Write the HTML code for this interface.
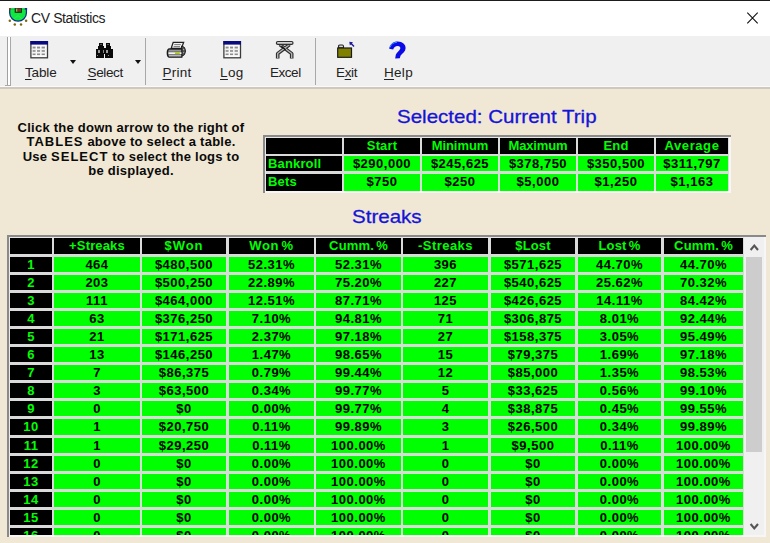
<!DOCTYPE html><html><head><meta charset="utf-8"><style>
*{margin:0;padding:0;box-sizing:border-box}
html,body{width:770px;height:543px;overflow:hidden;background:#f0e7d4;font-family:"Liberation Sans",sans-serif}
.abs{position:absolute}
#title{position:absolute;left:0;top:0;width:770px;height:36px;background:#fff}
#topline{position:absolute;left:0;top:0;width:770px;height:1px;background:#1c1c1c}
#ttext{position:absolute;left:31px;top:10px;font-size:14px;letter-spacing:-0.4px;color:#222;white-space:nowrap;line-height:16px}
#tb{position:absolute;left:0;top:36px;width:770px;height:51px;background:#f0f0f0}
#tbline{position:absolute;left:0;top:87px;width:770px;height:2px;background:#cdc9c0}
.tbt{position:absolute;top:64.5px;font-size:13.5px;color:#222;line-height:15px;white-space:nowrap}
.tbt u{text-decoration:underline;text-underline-offset:2px}
.sep{position:absolute;top:38px;width:1px;height:47px;background:#a8a8a8}
.tri{position:absolute;top:60px;width:0;height:0;border-left:3px solid transparent;border-right:3px solid transparent;border-top:4px solid #111}
.inst{position:absolute;left:0;width:262px;text-align:center;font-weight:bold;font-size:13px;letter-spacing:0.24px;color:#0a0a0a;line-height:14.6px;white-space:nowrap}
.blue{position:absolute;color:#1414d8;-webkit-text-stroke:0.3px #1414d8;font-size:19px;transform:scaleX(1.08);transform-origin:0 0;white-space:nowrap;line-height:20px}
.cw{letter-spacing:1.0px}
.c{position:absolute;overflow:hidden;font-weight:bold;font-size:13px;letter-spacing:0.5px;line-height:16px;text-align:center;white-space:nowrap}
.w{letter-spacing:0.15px;word-spacing:-1.5px}
.h{background:#000;color:#00ff00}
.d{background:#00ff00;color:#000}
</style></head><body>
<div id="title"></div><div id="topline"></div>
<svg class="abs" style="left:8px;top:8px" width="21" height="19" viewBox="0 0 21 19">
<path d="M1.7 0.7 H18.4 V5 A8.35 8.2 0 0 1 1.7 5 Z" fill="#10e840" stroke="#14308a" stroke-width="1.3"/>
<path d="M2.4 0 H17.7 V1.3 H2.4 Z" fill="#10e840"/>
<path d="M1 0 H2.6 V1.8 H1 Z" fill="#a03020"/>
<path d="M16.8 0 H19.1 V1.6 H16.8 Z" fill="#1a2a90"/>
<rect x="7.1" y="0.4" width="6.4" height="4" fill="#173c22" stroke="#0f3a18" stroke-width="0.9"/>
<rect x="8.1" y="0.6" width="1.4" height="3.1" fill="#c8b060"/>
<rect x="9.7" y="0.6" width="1.6" height="3.1" fill="#903020"/>
<rect x="11.4" y="0.6" width="1.3" height="3.1" fill="#a04030"/>
<path d="M6 11 L10 7.5 L14 11" fill="none" stroke="#50f080" stroke-width="0.8" opacity="0.6"/>
<circle cx="1.8" cy="12.7" r="1.25" fill="#7a6a10"/>
<circle cx="6.8" cy="16.5" r="1.25" fill="#7a6a10"/>
<circle cx="13" cy="16.5" r="1.25" fill="#7a6a10"/>
<circle cx="18.1" cy="12.7" r="1.25" fill="#7a6a10"/>
</svg>
<div id="ttext">CV Statistics</div>
<svg class="abs" style="left:746px;top:12px" width="13" height="13" viewBox="0 0 13 13"><path d="M1.3 0.7 L11.7 11.3 M11.7 0.7 L1.3 11.3" stroke="#111" stroke-width="1.1"/></svg>
<div id="tb"></div><div id="tbline"></div><div class="abs" style="left:0;top:86px;width:770px;height:1px;background:#fafafa"></div>
<div class="abs" style="left:7px;top:37px;width:1px;height:49px;background:#a0a0a0"></div>
<div class="abs" style="left:8px;top:37px;width:2px;height:49px;background:#fff"></div>
<div class="abs" style="left:10px;top:37px;width:1px;height:49px;background:#a8a8a8"></div>
<div class="abs" style="left:5px;top:85px;width:6px;height:1px;background:#a8a8a8"></div>
<svg class="abs" style="left:30px;top:41px" width="19" height="18" viewBox="0 0 19 18"><rect x="0.9" y="0.6" width="16.6" height="16.2" fill="#fbfbfb" stroke="#3a3a3a" stroke-width="1.3"/><rect x="0.4" y="0" width="17.6" height="3.6" fill="#0a0a80"/><rect x="2.6" y="5.6" width="3.0" height="1.9" fill="#8c8c8c"/><rect x="7.0" y="5.6" width="3.1" height="1.9" fill="#8c8c8c"/><rect x="11.6" y="5.6" width="3.3" height="1.9" fill="#8c8c8c"/><rect x="2.6" y="9.1" width="3.0" height="1.7" fill="#8c8c8c"/><rect x="7.0" y="9.1" width="3.1" height="1.7" fill="#8c8c8c"/><rect x="11.6" y="9.1" width="3.3" height="1.7" fill="#8c8c8c"/><rect x="2.6" y="12.4" width="3.0" height="1.7" fill="#8c8c8c"/><rect x="7.0" y="12.4" width="3.1" height="1.7" fill="#8c8c8c"/><rect x="11.6" y="12.4" width="3.3" height="1.7" fill="#8c8c8c"/><path d="M1.6 8.6 H17 M1.6 11.9 H17" stroke="#e4e4e4" stroke-width="0.6"/></svg>
<svg class="abs" style="left:222.5px;top:41px" width="19" height="18" viewBox="0 0 19 18"><rect x="0.9" y="0.6" width="16.6" height="16.2" fill="#fbfbfb" stroke="#3a3a3a" stroke-width="1.3"/><rect x="0.4" y="0" width="17.6" height="3.6" fill="#0a0a80"/><rect x="2.6" y="5.6" width="3.0" height="1.9" fill="#8c8c8c"/><rect x="7.0" y="5.6" width="3.1" height="1.9" fill="#8c8c8c"/><rect x="11.6" y="5.6" width="3.3" height="1.9" fill="#8c8c8c"/><rect x="2.6" y="9.1" width="3.0" height="1.7" fill="#8c8c8c"/><rect x="7.0" y="9.1" width="3.1" height="1.7" fill="#8c8c8c"/><rect x="11.6" y="9.1" width="3.3" height="1.7" fill="#8c8c8c"/><rect x="2.6" y="12.4" width="3.0" height="1.7" fill="#8c8c8c"/><rect x="7.0" y="12.4" width="3.1" height="1.7" fill="#8c8c8c"/><rect x="11.6" y="12.4" width="3.3" height="1.7" fill="#8c8c8c"/><path d="M1.6 8.6 H17 M1.6 11.9 H17" stroke="#e4e4e4" stroke-width="0.6"/></svg>
<svg class="abs" style="left:94px;top:40px" width="22" height="20" viewBox="0 0 22 20" shape-rendering="crispEdges">
<path d="M5 3 H9 V6 H10 V8 H12 V6 H12 V3 H16 V6 H17 V9 H19 V18 H11 V14 H10 V18 H2 V9 H4 V6 H5 Z" fill="#0a0a0a"/>
<rect x="4" y="10" width="2" height="3" fill="#9a9a9a"/>
<rect x="9" y="10" width="1" height="3" fill="#8a8a8a"/>
<rect x="12" y="10" width="2" height="3" fill="#9a9a9a"/>
<rect x="3" y="15" width="1" height="1" fill="#888"/>
<rect x="14" y="15" width="1" height="1" fill="#888"/>
<rect x="6" y="4" width="2" height="1" fill="#555"/>
<rect x="13" y="4" width="2" height="1" fill="#555"/>
</svg>
<svg class="abs" style="left:164px;top:39px" width="26" height="22" viewBox="0 0 26 22">
<path d="M9.2 3.4 H19.6 L17.4 9.4 H7.2 Z" fill="#f2f2f2" stroke="#222" stroke-width="1.3"/>
<path d="M10.3 5.6 H16.8 M9.6 7.6 H16" stroke="#6a6a6a" stroke-width="0.9"/>
<path d="M17.5 7 Q21.5 7.5 21.5 12 Q21.5 16.5 17.5 17.5 Z" fill="#555" stroke="#222" stroke-width="1"/>
<path d="M5.5 9.9 H17.8 V18.2 H5.5 Q3.3 18 3.3 14 Q3.3 10 5.5 9.9 Z" fill="#6e6e6e" stroke="#1a1a1a" stroke-width="1.3"/>
<rect x="4.5" y="13.3" width="13" height="1.7" fill="#f4f4f4"/>
<rect x="11" y="13.2" width="4.8" height="1.9" fill="#a8c820"/>
<rect x="5" y="15.8" width="12.2" height="1.6" fill="#b8b8b8"/>
<rect x="5" y="11.1" width="12.2" height="1.2" fill="#9a9a9a"/>
<circle cx="19.6" cy="10.5" r="0.7" fill="#aaa"/><circle cx="19.6" cy="13.6" r="0.7" fill="#aaa"/>
</svg>
<svg class="abs" style="left:274px;top:40px" width="22" height="20" viewBox="0 0 22 20">
<g fill="none" stroke-linejoin="round" stroke-linecap="butt">
<path d="M3.7 18.6 V13.6 L15.6 4.6" stroke="#2e2e2e" stroke-width="3.6"/>
<path d="M17.7 18.6 V13.6 L5.8 4.6" stroke="#2e2e2e" stroke-width="3.6"/>
<path d="M3.7 18.1 V13.6 L15.6 4.6" stroke="#b8b8b8" stroke-width="1.3"/>
<path d="M17.7 18.1 V13.6 L5.8 4.6" stroke="#b8b8b8" stroke-width="1.3"/>
<path d="M7.4 6.2 L11.6 9.8" stroke="#0a0a0a" stroke-width="1.3"/>
<rect x="2.4" y="1.5" width="16.6" height="2.8" rx="1.4" fill="#d4d4d4" stroke="#2e2e2e" stroke-width="1.2"/>
<path d="M5.5 4.6 H16" stroke="#333" stroke-width="1"/>
</g>
</svg>
<svg class="abs" style="left:333px;top:38px" width="26" height="24" viewBox="0 0 26 24">
<path d="M5.6 9.9 V7.6 Q5.8 7 7 7 H9.4 Q10.4 7 10.5 8.4 V9.9 Z" fill="#d8d8d8" stroke="#222" stroke-width="1.1"/>
<rect x="4.7" y="10" width="13.8" height="9.3" fill="#808000" stroke="#1a1a1a" stroke-width="1.2"/>
<path d="M21 8.6 L17.2 4.6" stroke="#1a1a9a" stroke-width="1.4"/>
<path d="M16.3 3.8 L20 4.3 L16.9 7.4 Z" fill="#1a1a9a"/>
</svg>
<svg class="abs" style="left:385px;top:38px" width="26" height="24" viewBox="0 0 26 24">
<path d="M4.2 10.8 C4.8 6.2 8.5 3.5 12.8 3.6 C17.5 3.7 20.8 6.5 20.6 10.3 C20.4 13.6 17.8 15.4 15.6 17.4 L14.8 20.2 L10.2 20.4 L10.8 16.8 C11.8 14.2 14.8 12.8 15.3 10.6 C15.6 9 14.4 8 12.6 8.1 C10.3 8.2 8.8 9.6 8.2 11.4 Z" fill="#0a0ae6"/>
<path d="M5 9.4 C6 6 9 4.4 12 4.3" fill="none" stroke="#40c8ff" stroke-width="0.9" opacity="0.8"/>
</svg>
<div class="tbt" style="left:25px;letter-spacing:-0.15px"><u>T</u>able</div>
<div class="tbt" style="left:87.5px;letter-spacing:-0.36px"><u>S</u>elect</div>
<div class="tbt" style="left:162.5px;letter-spacing:0.22px"><u>P</u>rint</div>
<div class="tbt" style="left:220px;letter-spacing:0.4px"><u>L</u>og</div>
<div class="tbt" style="left:270px;letter-spacing:-0.47px">Excel</div>
<div class="tbt" style="left:336px;letter-spacing:-0.37px">E<u>x</u>it</div>
<div class="tbt" style="left:384px;letter-spacing:0.3px"><u>H</u>elp</div>
<div class="tri" style="left:70px"></div><div class="tri" style="left:135px"></div>
<div class="sep" style="left:145px"></div><div class="sep" style="left:315px"></div>
<div class="inst" style="top:120.50px">Click the down arrow to the right of</div>
<div class="inst" style="top:135.10px"><span class=cw>TABLES</span> above to select a table.</div>
<div class="inst" style="top:149.70px">Use <span class=cw>SELECT</span> to select the logs to</div>
<div class="inst" style="top:164.30px">be displayed.</div>
<div class="blue" style="left:397px;top:106.8px">Selected: Current Trip</div>
<div class="blue" style="left:352px;top:206.8px">Streaks</div>
<div class="abs" style="left:263px;top:135px;width:468px;height:58px;background:#dadada"></div><div class="abs" style="left:263px;top:135px;width:468px;height:2px;background:#8a8a8a"></div><div class="abs" style="left:263px;top:135px;width:2px;height:58px;background:#8a8a8a"></div><div class="abs" style="left:265px;top:137px;width:466px;height:1px;background:#e8e8e8"></div><div class="abs" style="left:265px;top:137px;width:1px;height:56px;background:#e8e8e8"></div><div class="abs" style="left:265px;top:191px;width:466px;height:2px;background:#f6f6f6"></div><div class="abs" style="left:729px;top:137px;width:2px;height:56px;background:#f6f6f6"></div>
<div class="c h w" style="left:266px;top:138px;width:76px;height:16px;line-height:16px;text-align:left;padding-left:2px;"></div>
<div class="c h w" style="left:344px;top:138px;width:76px;height:16px;line-height:16px;">Start</div>
<div class="c h w" style="left:422px;top:138px;width:76px;height:16px;line-height:16px;letter-spacing:-0.06px;">Minimum</div>
<div class="c h w" style="left:500px;top:138px;width:76px;height:16px;line-height:16px;letter-spacing:-0.14px;">Maximum</div>
<div class="c h w" style="left:578px;top:138px;width:76px;height:16px;line-height:16px;">End</div>
<div class="c h w" style="left:656px;top:138px;width:72px;height:16px;line-height:16px;letter-spacing:0.59px;">Average</div>
<div class="c h w" style="left:266px;top:156px;width:76px;height:15px;line-height:16px;text-align:left;padding-left:2px;">Bankroll</div>
<div class="c d" style="left:344px;top:156px;width:76px;height:15px;line-height:16px;">$290,000</div>
<div class="c d" style="left:422px;top:156px;width:76px;height:15px;line-height:16px;">$245,625</div>
<div class="c d" style="left:500px;top:156px;width:76px;height:15px;line-height:16px;">$378,750</div>
<div class="c d" style="left:578px;top:156px;width:76px;height:15px;line-height:16px;">$350,500</div>
<div class="c d" style="left:656px;top:156px;width:72px;height:15px;line-height:16px;">$311,797</div>
<div class="c h w" style="left:266px;top:174px;width:76px;height:17px;line-height:16px;text-align:left;padding-left:2px;">Bets</div>
<div class="c d" style="left:344px;top:174px;width:76px;height:17px;line-height:16px;">$750</div>
<div class="c d" style="left:422px;top:174px;width:76px;height:17px;line-height:16px;">$250</div>
<div class="c d" style="left:500px;top:174px;width:76px;height:17px;line-height:16px;">$5,000</div>
<div class="c d" style="left:578px;top:174px;width:76px;height:17px;line-height:16px;">$1,250</div>
<div class="c d" style="left:656px;top:174px;width:72px;height:17px;line-height:16px;">$1,163</div>
<div class="abs" style="left:7px;top:235px;width:759px;height:302px;background:#dadada"></div><div class="abs" style="left:7px;top:235px;width:759px;height:2px;background:#8a8a8a"></div><div class="abs" style="left:7px;top:235px;width:2px;height:302px;background:#8a8a8a"></div><div class="abs" style="left:9px;top:237px;width:757px;height:1px;background:#e8e8e8"></div><div class="abs" style="left:9px;top:237px;width:1px;height:300px;background:#e8e8e8"></div><div class="abs" style="left:9px;top:535px;width:757px;height:2px;background:#f6f6f6"></div><div class="abs" style="left:764px;top:237px;width:2px;height:300px;background:#f6f6f6"></div>
<div class="abs" style="left:10px;top:238px;width:734px;height:297px;overflow:hidden">
<div class="c h w" style="left:0px;top:0px;width:42px;height:16px;"></div>
<div class="c h w" style="left:44px;top:0px;width:86px;height:16px;">+Streaks</div>
<div class="c h w" style="left:132px;top:0px;width:84px;height:16px;letter-spacing:0.97px;">$Won</div>
<div class="c h w" style="left:219px;top:0px;width:85px;height:16px;letter-spacing:0.55px;">Won %</div>
<div class="c h w" style="left:306px;top:0px;width:85px;height:16px;">Cumm. %</div>
<div class="c h w" style="left:393px;top:0px;width:85px;height:16px;letter-spacing:0.45px;">-Streaks</div>
<div class="c h w" style="left:481px;top:0px;width:84px;height:16px;">$Lost</div>
<div class="c h w" style="left:568px;top:0px;width:83px;height:16px;">Lost %</div>
<div class="c h w" style="left:654px;top:0px;width:79px;height:16px;">Cumm. %</div>
<div class="c h" style="left:0px;top:19px;width:42px;height:15px;">1</div>
<div class="c d" style="left:44px;top:19px;width:86px;height:15px;">464</div>
<div class="c d" style="left:132px;top:19px;width:84px;height:15px;">$480,500</div>
<div class="c d" style="left:219px;top:19px;width:85px;height:15px;">52.31%</div>
<div class="c d" style="left:306px;top:19px;width:85px;height:15px;">52.31%</div>
<div class="c d" style="left:393px;top:19px;width:85px;height:15px;">396</div>
<div class="c d" style="left:481px;top:19px;width:84px;height:15px;">$571,625</div>
<div class="c d" style="left:568px;top:19px;width:83px;height:15px;">44.70%</div>
<div class="c d" style="left:654px;top:19px;width:79px;height:15px;">44.70%</div>
<div class="c h" style="left:0px;top:37px;width:42px;height:15px;">2</div>
<div class="c d" style="left:44px;top:37px;width:86px;height:15px;">203</div>
<div class="c d" style="left:132px;top:37px;width:84px;height:15px;">$500,250</div>
<div class="c d" style="left:219px;top:37px;width:85px;height:15px;">22.89%</div>
<div class="c d" style="left:306px;top:37px;width:85px;height:15px;">75.20%</div>
<div class="c d" style="left:393px;top:37px;width:85px;height:15px;">227</div>
<div class="c d" style="left:481px;top:37px;width:84px;height:15px;">$540,625</div>
<div class="c d" style="left:568px;top:37px;width:83px;height:15px;">25.62%</div>
<div class="c d" style="left:654px;top:37px;width:79px;height:15px;">70.32%</div>
<div class="c h" style="left:0px;top:55px;width:42px;height:15px;">3</div>
<div class="c d" style="left:44px;top:55px;width:86px;height:15px;">111</div>
<div class="c d" style="left:132px;top:55px;width:84px;height:15px;">$464,000</div>
<div class="c d" style="left:219px;top:55px;width:85px;height:15px;">12.51%</div>
<div class="c d" style="left:306px;top:55px;width:85px;height:15px;">87.71%</div>
<div class="c d" style="left:393px;top:55px;width:85px;height:15px;">125</div>
<div class="c d" style="left:481px;top:55px;width:84px;height:15px;">$426,625</div>
<div class="c d" style="left:568px;top:55px;width:83px;height:15px;">14.11%</div>
<div class="c d" style="left:654px;top:55px;width:79px;height:15px;">84.42%</div>
<div class="c h" style="left:0px;top:73px;width:42px;height:15px;">4</div>
<div class="c d" style="left:44px;top:73px;width:86px;height:15px;">63</div>
<div class="c d" style="left:132px;top:73px;width:84px;height:15px;">$376,250</div>
<div class="c d" style="left:219px;top:73px;width:85px;height:15px;">7.10%</div>
<div class="c d" style="left:306px;top:73px;width:85px;height:15px;">94.81%</div>
<div class="c d" style="left:393px;top:73px;width:85px;height:15px;">71</div>
<div class="c d" style="left:481px;top:73px;width:84px;height:15px;">$306,875</div>
<div class="c d" style="left:568px;top:73px;width:83px;height:15px;">8.01%</div>
<div class="c d" style="left:654px;top:73px;width:79px;height:15px;">92.44%</div>
<div class="c h" style="left:0px;top:91px;width:42px;height:15px;">5</div>
<div class="c d" style="left:44px;top:91px;width:86px;height:15px;">21</div>
<div class="c d" style="left:132px;top:91px;width:84px;height:15px;">$171,625</div>
<div class="c d" style="left:219px;top:91px;width:85px;height:15px;">2.37%</div>
<div class="c d" style="left:306px;top:91px;width:85px;height:15px;">97.18%</div>
<div class="c d" style="left:393px;top:91px;width:85px;height:15px;">27</div>
<div class="c d" style="left:481px;top:91px;width:84px;height:15px;">$158,375</div>
<div class="c d" style="left:568px;top:91px;width:83px;height:15px;">3.05%</div>
<div class="c d" style="left:654px;top:91px;width:79px;height:15px;">95.49%</div>
<div class="c h" style="left:0px;top:109px;width:42px;height:15px;">6</div>
<div class="c d" style="left:44px;top:109px;width:86px;height:15px;">13</div>
<div class="c d" style="left:132px;top:109px;width:84px;height:15px;">$146,250</div>
<div class="c d" style="left:219px;top:109px;width:85px;height:15px;">1.47%</div>
<div class="c d" style="left:306px;top:109px;width:85px;height:15px;">98.65%</div>
<div class="c d" style="left:393px;top:109px;width:85px;height:15px;">15</div>
<div class="c d" style="left:481px;top:109px;width:84px;height:15px;">$79,375</div>
<div class="c d" style="left:568px;top:109px;width:83px;height:15px;">1.69%</div>
<div class="c d" style="left:654px;top:109px;width:79px;height:15px;">97.18%</div>
<div class="c h" style="left:0px;top:127px;width:42px;height:15px;">7</div>
<div class="c d" style="left:44px;top:127px;width:86px;height:15px;">7</div>
<div class="c d" style="left:132px;top:127px;width:84px;height:15px;">$86,375</div>
<div class="c d" style="left:219px;top:127px;width:85px;height:15px;">0.79%</div>
<div class="c d" style="left:306px;top:127px;width:85px;height:15px;">99.44%</div>
<div class="c d" style="left:393px;top:127px;width:85px;height:15px;">12</div>
<div class="c d" style="left:481px;top:127px;width:84px;height:15px;">$85,000</div>
<div class="c d" style="left:568px;top:127px;width:83px;height:15px;">1.35%</div>
<div class="c d" style="left:654px;top:127px;width:79px;height:15px;">98.53%</div>
<div class="c h" style="left:0px;top:145px;width:42px;height:15px;">8</div>
<div class="c d" style="left:44px;top:145px;width:86px;height:15px;">3</div>
<div class="c d" style="left:132px;top:145px;width:84px;height:15px;">$63,500</div>
<div class="c d" style="left:219px;top:145px;width:85px;height:15px;">0.34%</div>
<div class="c d" style="left:306px;top:145px;width:85px;height:15px;">99.77%</div>
<div class="c d" style="left:393px;top:145px;width:85px;height:15px;">5</div>
<div class="c d" style="left:481px;top:145px;width:84px;height:15px;">$33,625</div>
<div class="c d" style="left:568px;top:145px;width:83px;height:15px;">0.56%</div>
<div class="c d" style="left:654px;top:145px;width:79px;height:15px;">99.10%</div>
<div class="c h" style="left:0px;top:163px;width:42px;height:15px;">9</div>
<div class="c d" style="left:44px;top:163px;width:86px;height:15px;">0</div>
<div class="c d" style="left:132px;top:163px;width:84px;height:15px;">$0</div>
<div class="c d" style="left:219px;top:163px;width:85px;height:15px;">0.00%</div>
<div class="c d" style="left:306px;top:163px;width:85px;height:15px;">99.77%</div>
<div class="c d" style="left:393px;top:163px;width:85px;height:15px;">4</div>
<div class="c d" style="left:481px;top:163px;width:84px;height:15px;">$38,875</div>
<div class="c d" style="left:568px;top:163px;width:83px;height:15px;">0.45%</div>
<div class="c d" style="left:654px;top:163px;width:79px;height:15px;">99.55%</div>
<div class="c h" style="left:0px;top:181px;width:42px;height:16px;">10</div>
<div class="c d" style="left:44px;top:181px;width:86px;height:16px;">1</div>
<div class="c d" style="left:132px;top:181px;width:84px;height:16px;">$20,750</div>
<div class="c d" style="left:219px;top:181px;width:85px;height:16px;">0.11%</div>
<div class="c d" style="left:306px;top:181px;width:85px;height:16px;">99.89%</div>
<div class="c d" style="left:393px;top:181px;width:85px;height:16px;">3</div>
<div class="c d" style="left:481px;top:181px;width:84px;height:16px;">$26,500</div>
<div class="c d" style="left:568px;top:181px;width:83px;height:16px;">0.34%</div>
<div class="c d" style="left:654px;top:181px;width:79px;height:16px;">99.89%</div>
<div class="c h" style="left:0px;top:200px;width:42px;height:15px;">11</div>
<div class="c d" style="left:44px;top:200px;width:86px;height:15px;">1</div>
<div class="c d" style="left:132px;top:200px;width:84px;height:15px;">$29,250</div>
<div class="c d" style="left:219px;top:200px;width:85px;height:15px;">0.11%</div>
<div class="c d" style="left:306px;top:200px;width:85px;height:15px;">100.00%</div>
<div class="c d" style="left:393px;top:200px;width:85px;height:15px;">1</div>
<div class="c d" style="left:481px;top:200px;width:84px;height:15px;">$9,500</div>
<div class="c d" style="left:568px;top:200px;width:83px;height:15px;">0.11%</div>
<div class="c d" style="left:654px;top:200px;width:79px;height:15px;">100.00%</div>
<div class="c h" style="left:0px;top:218px;width:42px;height:15px;">12</div>
<div class="c d" style="left:44px;top:218px;width:86px;height:15px;">0</div>
<div class="c d" style="left:132px;top:218px;width:84px;height:15px;">$0</div>
<div class="c d" style="left:219px;top:218px;width:85px;height:15px;">0.00%</div>
<div class="c d" style="left:306px;top:218px;width:85px;height:15px;">100.00%</div>
<div class="c d" style="left:393px;top:218px;width:85px;height:15px;">0</div>
<div class="c d" style="left:481px;top:218px;width:84px;height:15px;">$0</div>
<div class="c d" style="left:568px;top:218px;width:83px;height:15px;">0.00%</div>
<div class="c d" style="left:654px;top:218px;width:79px;height:15px;">100.00%</div>
<div class="c h" style="left:0px;top:236px;width:42px;height:15px;">13</div>
<div class="c d" style="left:44px;top:236px;width:86px;height:15px;">0</div>
<div class="c d" style="left:132px;top:236px;width:84px;height:15px;">$0</div>
<div class="c d" style="left:219px;top:236px;width:85px;height:15px;">0.00%</div>
<div class="c d" style="left:306px;top:236px;width:85px;height:15px;">100.00%</div>
<div class="c d" style="left:393px;top:236px;width:85px;height:15px;">0</div>
<div class="c d" style="left:481px;top:236px;width:84px;height:15px;">$0</div>
<div class="c d" style="left:568px;top:236px;width:83px;height:15px;">0.00%</div>
<div class="c d" style="left:654px;top:236px;width:79px;height:15px;">100.00%</div>
<div class="c h" style="left:0px;top:254px;width:42px;height:15px;">14</div>
<div class="c d" style="left:44px;top:254px;width:86px;height:15px;">0</div>
<div class="c d" style="left:132px;top:254px;width:84px;height:15px;">$0</div>
<div class="c d" style="left:219px;top:254px;width:85px;height:15px;">0.00%</div>
<div class="c d" style="left:306px;top:254px;width:85px;height:15px;">100.00%</div>
<div class="c d" style="left:393px;top:254px;width:85px;height:15px;">0</div>
<div class="c d" style="left:481px;top:254px;width:84px;height:15px;">$0</div>
<div class="c d" style="left:568px;top:254px;width:83px;height:15px;">0.00%</div>
<div class="c d" style="left:654px;top:254px;width:79px;height:15px;">100.00%</div>
<div class="c h" style="left:0px;top:272px;width:42px;height:15px;">15</div>
<div class="c d" style="left:44px;top:272px;width:86px;height:15px;">0</div>
<div class="c d" style="left:132px;top:272px;width:84px;height:15px;">$0</div>
<div class="c d" style="left:219px;top:272px;width:85px;height:15px;">0.00%</div>
<div class="c d" style="left:306px;top:272px;width:85px;height:15px;">100.00%</div>
<div class="c d" style="left:393px;top:272px;width:85px;height:15px;">0</div>
<div class="c d" style="left:481px;top:272px;width:84px;height:15px;">$0</div>
<div class="c d" style="left:568px;top:272px;width:83px;height:15px;">0.00%</div>
<div class="c d" style="left:654px;top:272px;width:79px;height:15px;">100.00%</div>
<div class="c h" style="left:0px;top:290px;width:42px;height:15px;">16</div>
<div class="c d" style="left:44px;top:290px;width:86px;height:15px;">0</div>
<div class="c d" style="left:132px;top:290px;width:84px;height:15px;">$0</div>
<div class="c d" style="left:219px;top:290px;width:85px;height:15px;">0.00%</div>
<div class="c d" style="left:306px;top:290px;width:85px;height:15px;">100.00%</div>
<div class="c d" style="left:393px;top:290px;width:85px;height:15px;">0</div>
<div class="c d" style="left:481px;top:290px;width:84px;height:15px;">$0</div>
<div class="c d" style="left:568px;top:290px;width:83px;height:15px;">0.00%</div>
<div class="c d" style="left:654px;top:290px;width:79px;height:15px;">100.00%</div>
</div>
<div class="abs" style="left:744px;top:237px;width:20px;height:298px;background:#f0f0f0"></div>
<div class="abs" style="left:746px;top:257px;width:16px;height:195px;background:#cdcdcd"></div>
<svg class="abs" style="left:749px;top:243px" width="11" height="9" viewBox="0 0 11 9"><path d="M1.6 7 L5.3 2.6 L9 7" fill="none" stroke="#555" stroke-width="2.1"/></svg>
<svg class="abs" style="left:749px;top:522px" width="11" height="9" viewBox="0 0 11 9"><path d="M1.6 2 L5.3 6.4 L9 2" fill="none" stroke="#555" stroke-width="2.1"/></svg>
</body></html>
